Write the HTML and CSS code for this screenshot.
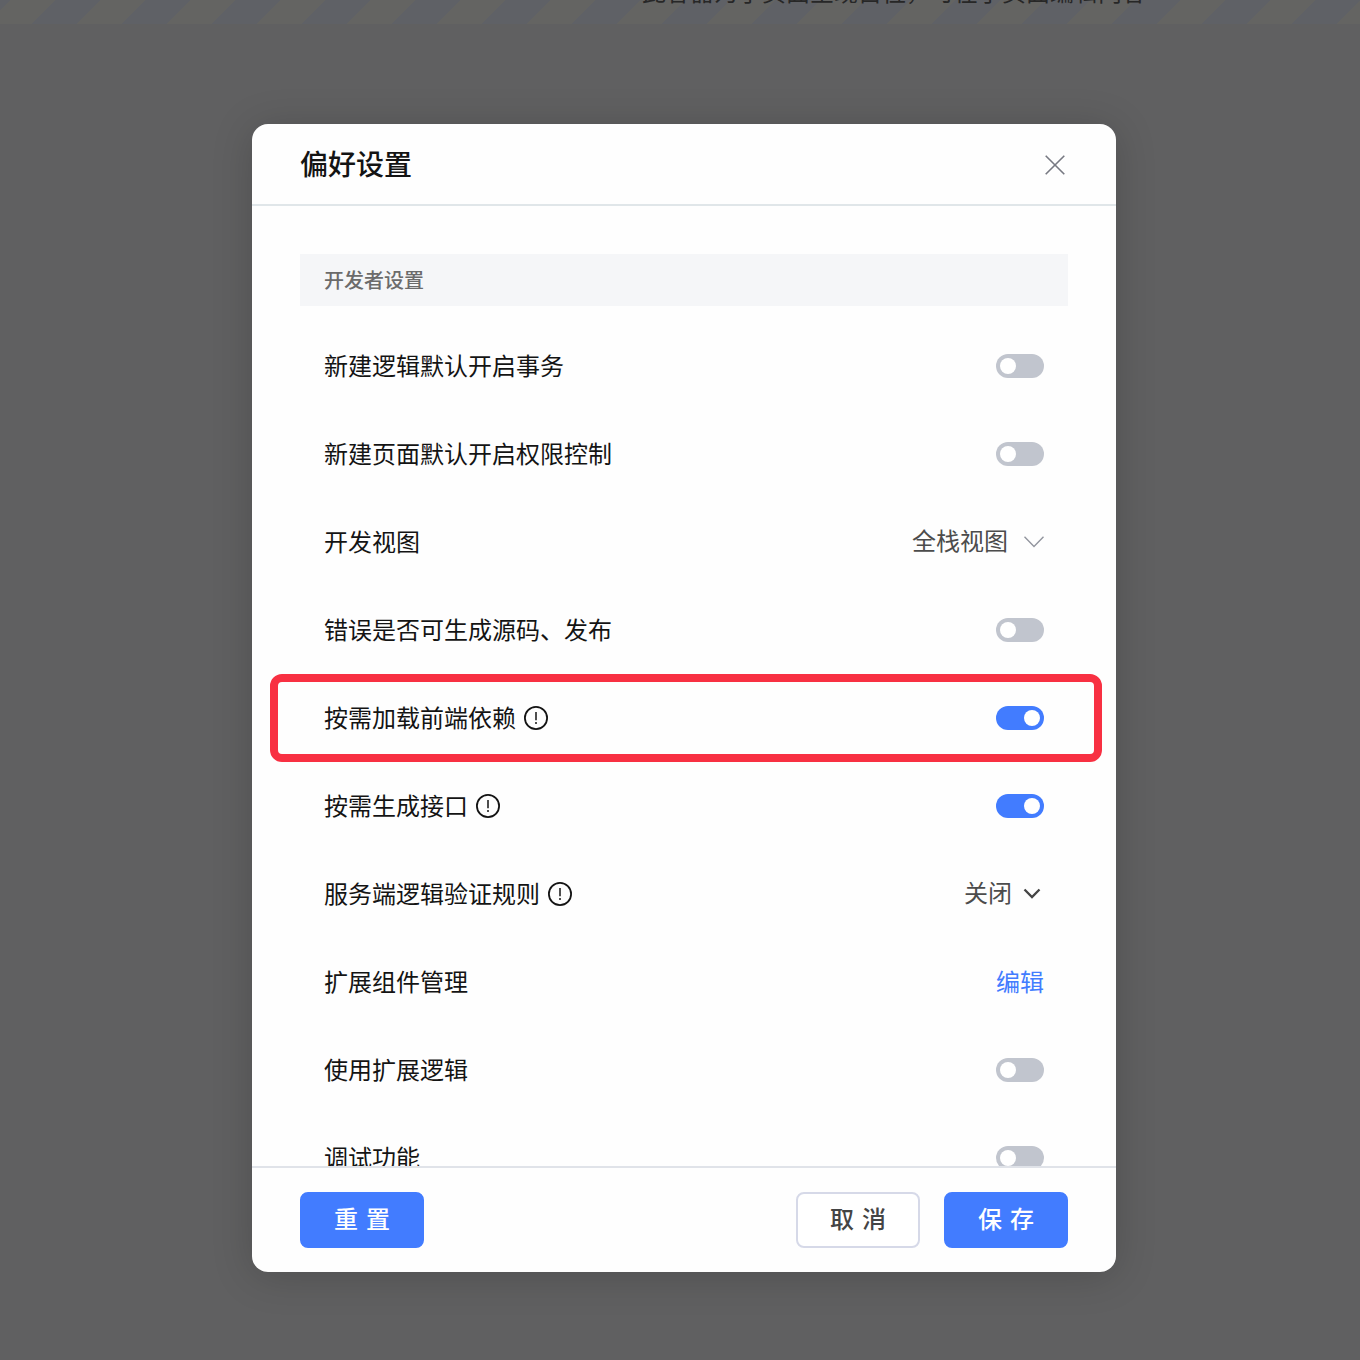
FILE: index.html
```html
<!DOCTYPE html>
<html lang="zh-CN">
<head>
<meta charset="utf-8">
<title>偏好设置</title>
<link rel="stylesheet" href="styles.css">
</head>
<body>
<div class="canvas-slot"><span class="slot-text">此容器为子页面呈现占位，可在子页面编辑内容</span></div>
<main class="stage">
  <section class="modal">
    <header class="modal-head">
      <h1 class="title">偏好设置</h1>
      <svg class="close" viewBox="0 0 20 20"><path d="M.7.7l18.6 18.6M19.3.7L.7 19.3"/></svg>
    </header>
    <div class="modal-body">
      <h2 class="group">开发者设置</h2>
      <div class="row"><span class="label"><span class="text">新建逻辑默认开启事务</span></span><span class="switch"></span></div>
      <div class="row"><span class="label"><span class="text">新建页面默认开启权限控制</span></span><span class="switch"></span></div>
      <div class="row"><span class="label"><span class="text">开发视图</span></span>
        <span class="select select-wide"><span class="text">全栈视图</span><svg class="chev-thin" viewBox="0 0 20 12"><path d="M.5 .8L10 10.4L19.5 .8"/></svg></span></div>
      <div class="row"><span class="label"><span class="text">错误是否可生成源码、发布</span></span><span class="switch"></span></div>
      <div class="row highlighted"><span class="label"><span class="text">按需加载前端依赖</span><svg class="info" viewBox="0 0 24 24"><circle cx="12" cy="12" r="11.1"/><path class="mark" d="M12 6v8.2M12 16v2"/></svg></span><span class="switch on"></span></div>
      <div class="row"><span class="label"><span class="text">按需生成接口</span><svg class="info" viewBox="0 0 24 24"><circle cx="12" cy="12" r="11.1"/><path class="mark" d="M12 6v8.2M12 16v2"/></svg></span><span class="switch on"></span></div>
      <div class="row"><span class="label"><span class="text">服务端逻辑验证规则</span><svg class="info" viewBox="0 0 24 24"><circle cx="12" cy="12" r="11.1"/><path class="mark" d="M12 6v8.2M12 16v2"/></svg></span>
        <span class="select"><span class="text">关闭</span><svg class="chev-bold" viewBox="0 0 24 24"><path d="M4.5 8.5L12 16L19.5 8.5"/></svg></span></div>
      <div class="row"><span class="label"><span class="text">扩展组件管理</span></span><a class="link text">编辑</a></div>
      <div class="row"><span class="label"><span class="text">使用扩展逻辑</span></span><span class="switch"></span></div>
      <div class="row"><span class="label"><span class="text">调试功能</span></span><span class="switch"></span></div>
    </div>
    <footer class="modal-foot">
      <button class="btn primary">重置</button>
      <div class="actions">
        <button class="btn">取消</button>
        <button class="btn primary">保存</button>
      </div>
    </footer>
  </section>
</main>
</body>
</html>
```
FILE: styles.css
```css
* { box-sizing: border-box; }
body {
  margin: 0;
  height: 1360px;
  overflow: hidden;
  background: #606061;
  color: #141414;
  font-family: "Noto Sans CJK SC", sans-serif;
  font-size: 24px;
}
.canvas-slot {
  height: 24px;
  padding-left: 428px;
  display: flex;
  justify-content: center;
  align-items: flex-start;
  background: repeating-linear-gradient(135deg, #5f6166 0 7.42px, #646462 7.42px 39.24px, #5f6166 39.24px 63.64px);
  overflow: hidden;
}
.slot-text {
  color: #272727;
  line-height: 36px;
  margin-top: -27px;
  white-space: nowrap;
}
.stage { padding: 100px 0 0 252px; }
.modal {
  width: 864px;
  height: 1148px;
  display: flex;
  flex-direction: column;
  background: #fefefe;
  border-radius: 16px;
  overflow: hidden;
  box-shadow: 0 4px 40px rgba(0, 0, 0, .18);
}
.modal-head {
  height: 82px;
  flex: none;
  display: flex;
  align-items: center;
  justify-content: space-between;
  padding: 0 51px 0 48px;
  border-bottom: 2px solid #e0e6e9;
}
.title { margin: 0; padding-bottom: 2px; font-size: 28px; line-height: 40px; font-weight: 500; }
.close { width: 20px; height: 20px; margin-top: 2px; fill: none; stroke: #777982; stroke-width: 1.6; }
.modal-body { flex: 1; min-height: 0; overflow: hidden; padding: 48px 48px 0; }
.group {
  margin: 0 0 16px;
  height: 52px;
  padding-left: 24px;
  background: #f5f6f8;
  color: #6b6b6b;
  font-size: 20px;
  font-weight: 500;
  line-height: 52px;
}
.row {
  height: 88px;
  padding: 0 24px;
  display: flex;
  align-items: center;
  justify-content: space-between;
}
.highlighted { position: relative; }
.highlighted::after {
  content: "";
  position: absolute;
  inset: 0 -34px 0 -30px;
  border: 8px solid #f83042;
  border-radius: 12px;
}
.label { display: flex; align-items: center; gap: 8px; }
.text { line-height: 36px; padding-bottom: 2px; }
.info { width: 24px; height: 24px; fill: none; stroke: #141414; stroke-width: 1.8; }
.mark { stroke-width: 1.5; }
.switch {
  width: 48px;
  height: 24px;
  padding: 4px;
  display: flex;
  border-radius: 12px;
  background: #c1c5ce;
}
.switch::before { content: ""; width: 16px; height: 16px; border-radius: 50%; background: #fff; }
.switch.on { justify-content: flex-end; background: #427cff; }
.select { display: flex; align-items: center; gap: 8px; color: #4c4c4c; padding-bottom: 2px; }
.select-wide { gap: 16px; }
.chev-thin { width: 20px; height: 12px; margin-top: 2px; fill: none; stroke: #92959e; stroke-width: 1.4; }
.chev-bold { width: 24px; height: 24px; fill: none; stroke: #444; stroke-width: 2.3; }
.link { color: #427cff; }
.modal-foot {
  height: 106px;
  flex: none;
  display: flex;
  align-items: center;
  justify-content: space-between;
  padding: 0 48px;
  border-top: 2px solid #e0e3e9;
}
.actions { display: flex; gap: 24px; }
.btn {
  width: 124px;
  height: 56px;
  padding: 0 0 4px 8px;
  border: 2px solid #d6d9e8;
  border-radius: 8px;
  background: #fff;
  color: #444;
  font: 500 24px/36px "Noto Sans CJK SC", sans-serif;
  letter-spacing: 8px;
}
.primary { border-color: #427cff; background: #427cff; color: #fff; }
```
